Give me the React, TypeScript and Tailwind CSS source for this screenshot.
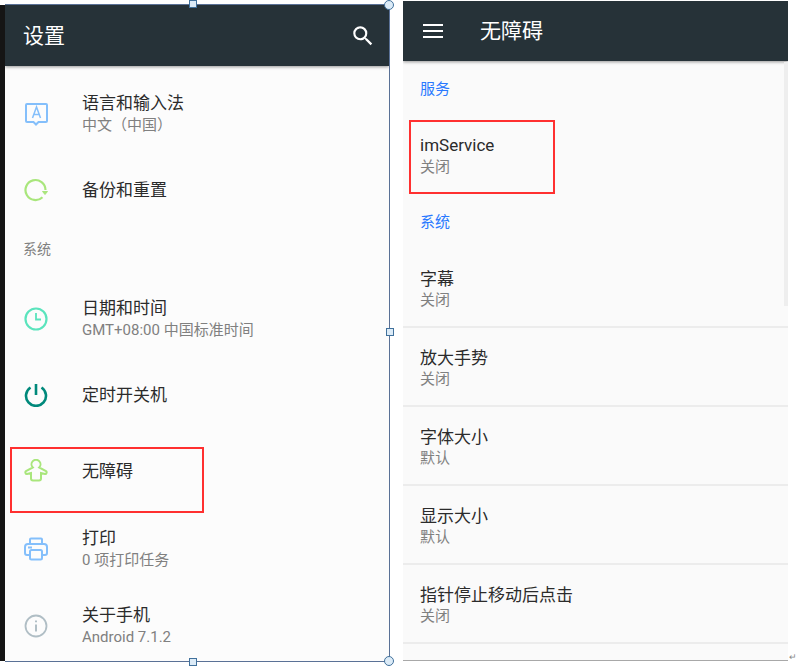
import type { ReactNode } from "react";

const font = { fontFamily: '"Roboto", "Noto Sans CJK SC", sans-serif' };

const InputIcon = () => (
  <svg width="24" height="24" viewBox="0 0 24 24" fill="none" stroke="#84bffb" strokeWidth="2">
    <path d="M3 2h19a1 1 0 0 1 1 1v16a1 1 0 0 1-1 1h-7.500L12 22.500 9.500 20H3a1 1 0 0 1-1-1V3a1 1 0 0 1 1-1z" />
    <path d="M8.500 16l4-11 4 11M9.900 12.500h5.200" strokeWidth="1.500" />
  </svg>
);

const BackupIcon = () => (
  <svg width="24" height="24" viewBox="0 0 24 24" fill="none" stroke="#a9e67c" strokeWidth="2.200">
    <path d="M21.500 12a10 10 0 1 0-3 7.200" />
    <path d="M18.500 13.500h5L21 16.500z" fill="#a9e67c" strokeWidth="1" />
  </svg>
);

const ClockIcon = () => (
  <svg width="24" height="24" viewBox="0 0 24 24" fill="none" stroke="#5be4bd" strokeWidth="2.200">
    <circle cx="12" cy="12" r="10.500" />
    <path d="M12 6v6.500h5" strokeWidth="1.800" />
  </svg>
);

const PowerIcon = () => (
  <svg width="24" height="24" viewBox="0 0 24 24" fill="none" stroke="#00897b" strokeWidth="2.600">
    <path d="M12 1v11" />
    <path d="M6.500 4.500a10 10 0 1 0 11 0" />
  </svg>
);

const AccessIcon = () => (
  <svg width="24" height="24" viewBox="0 0 24 24" fill="none" stroke="#a9e67c" strokeWidth="2">
    <path d="M8.800 8.500a4.500 4.500 0 1 1 6.400 0L22 12c1.200.8.600 3.200-1 3l-4-1v5.500a2 2 0 0 1-2 2H9a2 2 0 0 1-2-2V14l-4 1c-1.600.2-2.200-2.200-1-3z" />
  </svg>
);

const PrintIcon = () => (
  <svg width="24" height="24" viewBox="0 0 24 24" fill="none" stroke="#84bffb" strokeWidth="2">
    <path d="M6 7V2.500a1 1 0 0 1 1-1h10a1 1 0 0 1 1 1V7" />
    <path d="M6 18H3a2 2 0 0 1-2-2v-6a3 3 0 0 1 3-3h16a3 3 0 0 1 3 3v6a2 2 0 0 1-2 2h-3" />
    <rect x="6" y="13" width="12" height="9.500" rx="1.500" />
    <path d="M4 10.500h4" />
  </svg>
);

const InfoIcon = () => (
  <svg width="24" height="24" viewBox="0 0 24 24" fill="none" stroke="#b0bec5" strokeWidth="1.800">
    <circle cx="12" cy="12" r="10.500" />
    <path d="M12 10.500v7M12 6.500v1.800" strokeWidth="2" />
  </svg>
);

const SearchIcon = () => (
  <svg width="26" height="26" viewBox="0 0 24 24" fill="#ffffff">
    <path d="M15.500 14h-.79l-.28-.27A6.471 6.471 0 0 0 16 9.500 6.500 6.500 0 1 0 9.500 16c1.610 0 3.090-.590 4.230-1.570l.270.280v.790l5 4.990L20.490 19l-4.990-5zm-6 0C7.010 14 5 11.990 5 9.500S7.010 5 9.500 5 14 7.010 14 9.500 11.990 14 9.500 14z" />
  </svg>
);

const MenuIcon = () => (
  <svg width="20" height="14" viewBox="0 0 20 14" fill="#ffffff">
    <rect x="0" y="0" width="20" height="2" />
    <rect x="0" y="6" width="20" height="2" />
    <rect x="0" y="12" width="20" height="2" />
  </svg>
);

type RowProps = { icon: ReactNode; title: string; sub?: string; height?: string };

const SettingRow = ({ icon, title, sub, height = "h-[77px]" }: RowProps) => (
  <div className={`flex items-center ${height}`}>
    <div className="w-[77px] pl-[19px] shrink-0 flex items-center">{icon}</div>
    <div>
      <div className="text-[17px] leading-[22px] text-[#2b2b2b]">{title}</div>
      {sub && <div className="text-[15px] leading-[22px] text-[#808080]">{sub}</div>}
    </div>
  </div>
);

const ServiceRow = ({ title, sub }: { title: string; sub: string }) => (
  <div className="h-[79px] flex flex-col justify-center pl-[17px] border-b-2 border-[#ececec] pt-[4px]">
    <div className="text-[17px] leading-[22px] text-[#2b2b2b]">{title}</div>
    <div className="text-[15px] leading-[21px] text-[#808080]">{sub}</div>
  </div>
);

const Handle = ({ className }: { className: string }) => (
  <div className={`absolute w-2 h-2 bg-[#dcebf7] border border-[#41719c] ${className}`} />
);

export default function App() {
  return (
    <div className="w-[804px] h-[670px] bg-white flex overflow-hidden" style={font}>
      <div className="pt-[5px] shrink-0 w-[5px]">
        <div className="h-[656px] bg-[#151515]" />
      </div>

      {/* left phone */}
      <div className="relative mt-[5px] w-[385px] h-[657px] shrink-0 border-r border-b border-[#5a7196]">
        <div className="h-full bg-[#fcfcfc] overflow-hidden">
          <div className="h-[61px] bg-[#263238] shadow-[0_1px_3px_rgba(0,0,0,0.4)] flex items-center justify-between pl-[18px] pr-[13px]">
            <span className="text-[21px] text-white pt-[2px]">设置</span>
            <SearchIcon />
          </div>
          <div className="pt-[10px]">
            <SettingRow icon={<InputIcon />} title="语言和输入法" sub="中文（中国）" height="h-[76px]" />
            <SettingRow icon={<BackupIcon />} title="备份和重置" height="h-[76px]" />
            <div className="h-[52px] pl-[18px] pb-[10px] flex items-center text-[14px] text-[#808080]">系统</div>
            <SettingRow icon={<ClockIcon />} title="日期和时间" sub="GMT+08:00 中国标准时间" height="h-[76px] pt-px" />
            <SettingRow icon={<PowerIcon />} title="定时开关机" />
            <div className="relative">
              <SettingRow icon={<AccessIcon />} title="无障碍" height="h-[77px] pb-px" />
              <div className="absolute left-[5px] top-[14px] w-[194px] h-[66px] border-2 border-[#ff3030]" />
            </div>
            <SettingRow icon={<PrintIcon />} title="打印" sub="0 项打印任务" />
            <SettingRow icon={<InfoIcon />} title="关于手机" sub="Android 7.1.2" />
          </div>
        </div>
        <div className="absolute -top-px left-0 right-0 h-px bg-[#5a7196]" />
        <Handle className="-top-[5px] left-[184px]" />
        <Handle className="top-[323px] -right-[5px]" />
        <Handle className="-bottom-[5px] left-[184px]" />
        <div className="absolute -top-[5px] -right-[5px] w-2.5 h-2.5 rounded-full bg-[#dcebf7] border border-[#41719c]" />
        <div className="absolute -bottom-[5px] -right-[5px] w-2.5 h-2.5 rounded-full bg-[#dcebf7] border border-[#41719c]" />
      </div>

      {/* right phone */}
      <div className="relative ml-[13px] mt-px w-[385px] h-[660px] shrink-0 bg-[#fafafa] border-b border-[#a8a8a8] overflow-hidden">
        <div className="h-[60px] bg-[#263238] shadow-[0_1px_3px_rgba(0,0,0,0.4)] flex items-center">
          <div className="pl-5 w-[77px]"><MenuIcon /></div>
          <span className="text-[21px] text-white pt-[2px]">无障碍</span>
        </div>
        <div className="absolute right-0 top-[61px] w-1 h-[244px] bg-[#eeeeee]" />
        <div>
          <div className="h-[56px] pl-[17px] pt-px flex items-center text-[15px] text-[#2979ff]">服务</div>
          <div className="relative h-[78px] pl-[17px] flex flex-col justify-center">
            <div className="text-[17px] leading-[22px] text-[#2b2b2b]">imService</div>
            <div className="text-[15px] leading-[22px] text-[#808080]">关闭</div>
            <div className="absolute left-[6px] top-[3px] w-[146px] h-[74px] border-2 border-[#ff3030]" />
          </div>
          <div className="h-[46px] pl-[17px] pt-[8px] flex items-center text-[15px] text-[#2979ff]">系统</div>
          <div className="pt-[8px]">
            <ServiceRow title="字幕" sub="关闭" />
            <ServiceRow title="放大手势" sub="关闭" />
            <ServiceRow title="字体大小" sub="默认" />
            <ServiceRow title="显示大小" sub="默认" />
            <ServiceRow title="指针停止移动后点击" sub="关闭" />
          </div>
        </div>
      </div>
      <div className="self-end mb-[8px] ml-[1px] text-[9px] leading-none text-[#888888]">↵</div>
    </div>
  );
}
